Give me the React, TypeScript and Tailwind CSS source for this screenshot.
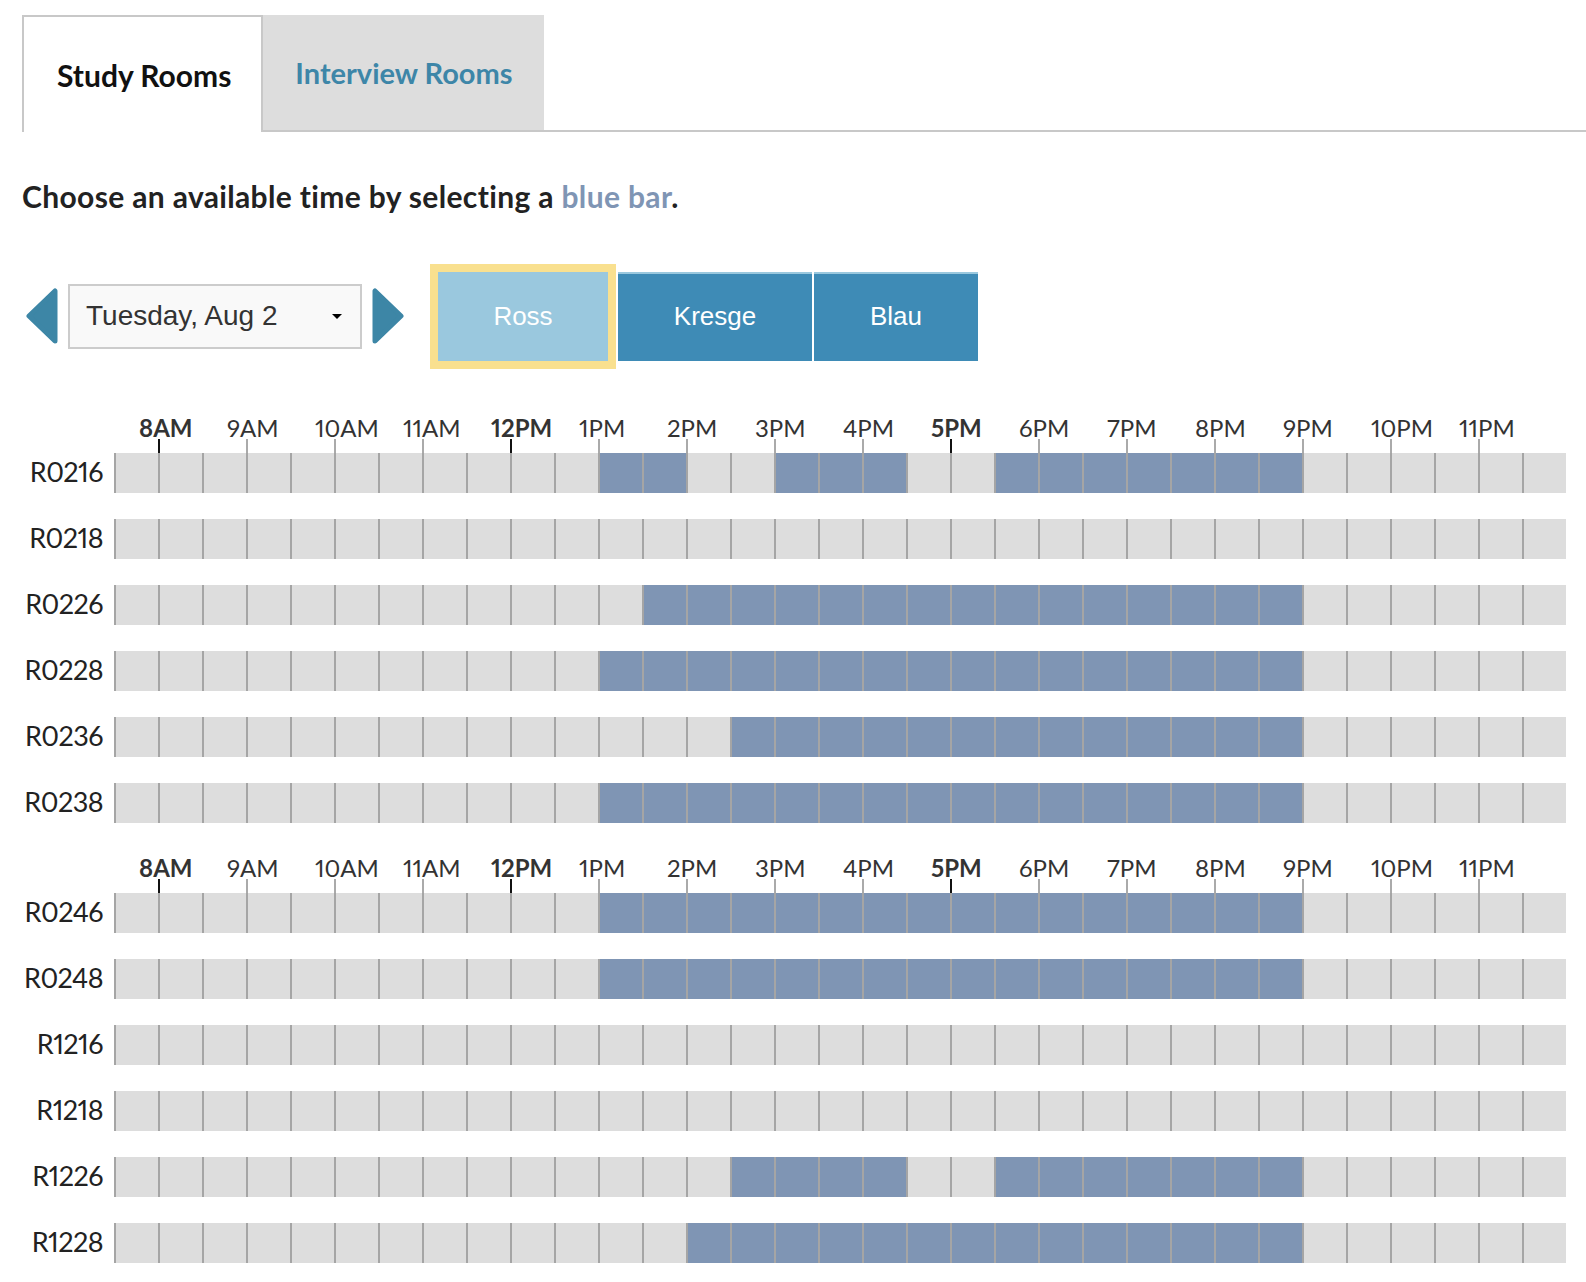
import React from "react";

type Room = { name: string; open: [number, number][] };

const HOURS = ["8AM", "9AM", "10AM", "11AM", "12PM", "1PM", "2PM", "3PM", "4PM", "5PM", "6PM", "7PM", "8PM", "9PM", "10PM", "11PM"];
const BOLD_HOURS = ["8AM", "12PM", "5PM"];
const CELLS = 33; // half hours from 7:30am to midnight

const firstFloor: Room[] = [
  { name: "R0216", open: [[11, 12], [15, 17], [20, 26]] },
  { name: "R0218", open: [] },
  { name: "R0226", open: [[12, 26]] },
  { name: "R0228", open: [[11, 26]] },
  { name: "R0236", open: [[14, 26]] },
  { name: "R0238", open: [[11, 26]] },
];

const secondFloor: Room[] = [
  { name: "R0246", open: [[11, 26]] },
  { name: "R0248", open: [[11, 26]] },
  { name: "R1216", open: [] },
  { name: "R1218", open: [] },
  { name: "R1226", open: [[14, 17], [20, 26]] },
  { name: "R1228", open: [[13, 26]] },
];

function Arrow({ dir }: { dir: "left" | "right" }) {
  const points = dir === "left" ? "29,3 29,53 3,28" : "3,3 3,53 29,28";
  return (
    <svg width="32" height="56" viewBox="0 0 32 56" className="shrink-0">
      <polygon points={points} fill="#3d86a6" stroke="#3d86a6" strokeWidth="5" strokeLinejoin="round" />
    </svg>
  );
}

function TimeAxis() {
  return (
    <div className="relative ml-[92px] h-[37px] w-[1452px] proportional-nums">
      {HOURS.map((h, i) => {
        const bold = BOLD_HOURS.includes(h);
        return (
          <React.Fragment key={h}>
            <span
              className={`absolute top-0 text-[24px] leading-6 text-[#333] ${bold ? "font-bold" : "font-normal"}`}
              style={{ left: 25 + 88 * i }}
            >
              {h}
            </span>
            <span
              className={`absolute bottom-0 h-[14px] w-[2px] ${bold ? "bg-[#111]" : "bg-[#aaaaaa]"}`}
              style={{ left: 44 + 88 * i }}
            />
          </React.Fragment>
        );
      })}
    </div>
  );
}

function RoomRow({ room }: { room: Room }) {
  const isOpen = (c: number) => room.open.some(([a, b]) => c >= a && c <= b);
  return (
    <div className="mb-[26px] flex h-10 items-center">
      <div className="w-[92px] pb-[3px] pr-[11px] text-right text-[27px] leading-none tracking-[-0.02em] text-[#222] proportional-nums">
        {room.name}
      </div>
      <div className="flex h-10 w-[1452px]">
        {Array.from({ length: CELLS }, (_, c) => (
          <div
            key={c}
            className={`h-10 w-[44px] shrink-0 cursor-pointer border-l-2 border-[#a5a5a5] ${isOpen(c) ? "bg-[#7f95b4]" : "bg-[#dddddd]"}`}
          />
        ))}
      </div>
    </div>
  );
}

function RoomGroup({ rooms, className }: { rooms: Room[]; className?: string }) {
  return (
    <section className={`flex flex-col ${className ?? ""}`}>
      <TimeAxis />
      {rooms.map((r) => (
        <RoomRow key={r.name} room={r} />
      ))}
    </section>
  );
}

export default function App() {
  return (
    <main className="min-h-screen bg-white pl-[22px] pt-[15px] font-[Lato,sans-serif]">
      {/* tabs */}
      <div className="flex items-end border-b-2 border-[#c8c8c8]">
        <div className="-mb-[2px] flex h-[117px] items-center border-2 border-b-0 border-[#c8c8c8] bg-white pl-[33px] pr-[30px] text-[30px] font-bold leading-none text-[#111]">
          Study Rooms
        </div>
        <div className="flex h-[115px] items-center bg-[#dddddd] pl-[32px] pr-[31px] text-[29px] font-bold leading-none text-[#3d86a8]">
          Interview Rooms
        </div>
      </div>

      <h1 className="mt-[49px] text-[30px] font-bold leading-[30px] tracking-[0.35px] text-[#222]">
        Choose an available time by selecting a <span className="text-[#7f95b4]">blue bar</span>.
      </h1>

      {/* date + location picker */}
      <div className="mt-[53px] flex h-[104px] items-center font-['Liberation_Sans',Arial,sans-serif]">
        <div className="ml-[4px]">
          <Arrow dir="left" />
        </div>
        <button
          type="button"
          className="ml-[10px] flex h-[65px] w-[294px] items-center justify-between border-2 border-[#cccccc] bg-[#f9f9f9] pl-4 pr-[18px] text-[28px] text-[#333]"
        >
          <span>Tuesday, Aug 2</span>
          <span className="h-0 w-0 border-x-[5px] border-t-[5px] border-x-transparent border-t-black" />
        </button>
        <div className="ml-[10px]">
          <Arrow dir="right" />
        </div>

        <div className="ml-[26px] bg-[#f9e08f] p-2">
          <button type="button" className="flex h-[89px] w-[170px] items-center justify-center bg-[#9ac8de] text-[26px] text-white">
            Ross
          </button>
        </div>
        <button
          type="button"
          className="ml-[2px] flex h-[89px] w-[194px] items-center justify-center border-t-2 border-[#9ac8de] bg-[#3e8bb6] pb-[2px] text-[26px] text-white"
        >
          Kresge
        </button>
        <button
          type="button"
          className="ml-[2px] flex h-[89px] w-[164px] items-center justify-center border-t-2 border-[#9ac8de] bg-[#3e8bb6] pb-[2px] text-[26px] text-white"
        >
          Blau
        </button>
      </div>

      <RoomGroup rooms={firstFloor} className="mt-[48px]" />
      <RoomGroup rooms={secondFloor} className="mt-[7px]" />
    </main>
  );
}
